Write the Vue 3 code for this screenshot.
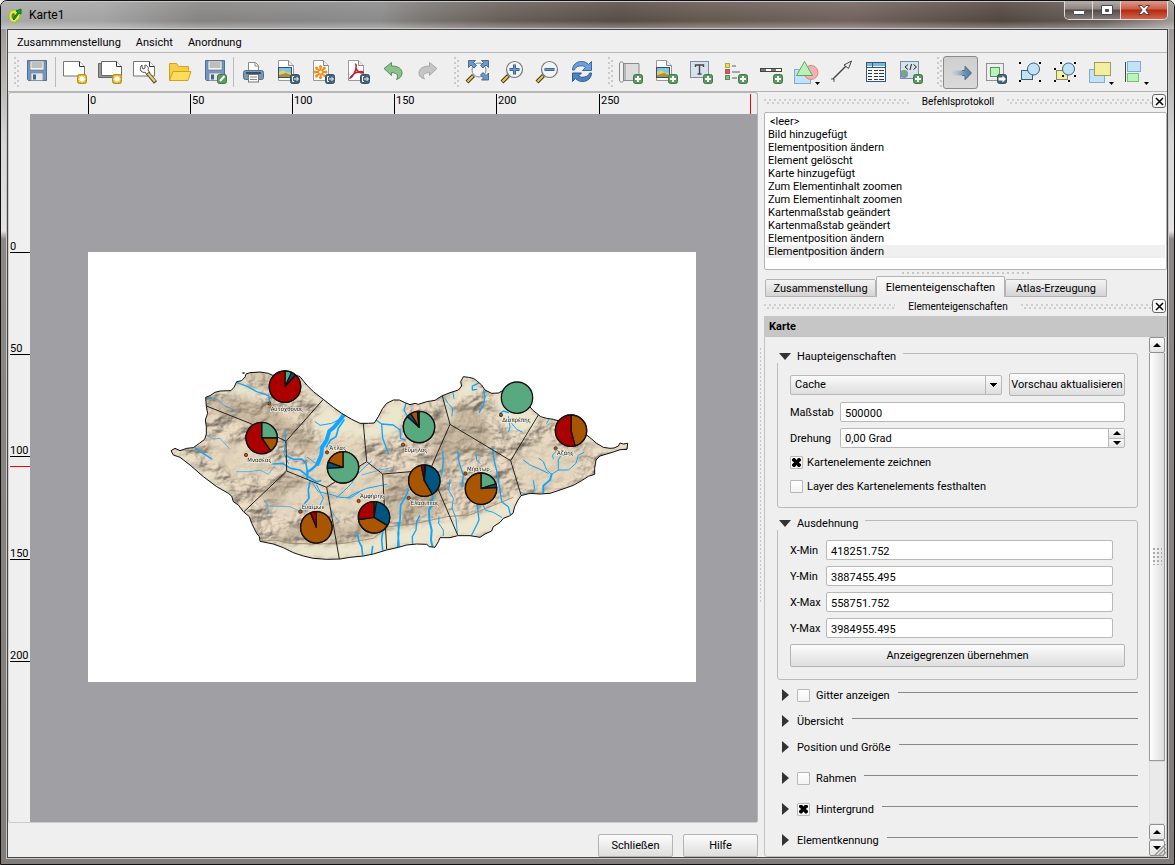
<script setup>
import { ref } from 'vue'

const badge = (fill, stroke) =>
  `<rect x="14.5" y="14.5" width="9" height="9" rx="2" fill="${fill}" stroke="${stroke}"/>`
const plus = badge('#5c9b62', '#3f7a45') + '<path d="M19 16v6M16 19h6" stroke="#fff" stroke-width="2"/>'
const star = badge('#d6b01c', '#b8940c') + '<path d="M19 15.5v7M15.5 19h7M16.5 16.5l5 5M21.5 16.5l-5 5" stroke="#fff" stroke-width="1.3"/>'
const exportBadge = badge('#45637c', '#33506a') + '<path d="M18 16.500h-1.500v5h1.500M18 19h4M20.500 17l2 2-2 2" stroke="#fff" fill="none"/>'
const sheet = '<path d="M2.500.500h10l5 5v15h-15z" fill="#fff" stroke="#999"/><path d="M12.500.500v5h5" fill="#eee" stroke="#888"/>'
const floppy = '<path d="M2.500.500h19v20h-18l-1-1z" fill="#7198c4" stroke="#4c6f9a"/><rect x="5" y="1" width="14" height="9" fill="#f4f4f4" stroke="#777" stroke-width=".7"/><path d="M6.500 3h11M6.500 5h11M6.500 7h11" stroke="#888"/><rect x="6" y="13" width="12" height="7.500" fill="#e8e8ea" stroke="#888" stroke-width=".7"/><rect x="8" y="14.500" width="3" height="5" fill="#3f6492"/>'
const handle = '<path d="M8.500 15.500L2 22" stroke="#333" stroke-width="4"/><path d="M8 16l-5.500 5.500" stroke="#f3c53c" stroke-width="2.200"/>'
const lens = handle + '<circle cx="14.500" cy="9.500" r="8" fill="#f1f4f8" stroke="#777" stroke-width="1.200"/>'
const picture = '<rect x="2.500" y="7.500" width="13" height="10" fill="#7cc3ef" stroke="#33506a"/><path d="M3 12l4-2 3 2 5 1v4h-12z" fill="#e5cd60"/><path d="M3 15l7-2 5 2v2h-12z" fill="#a69241"/>'
const drop = '<path d="M21 22h5l-2.500 3z" fill="#000"/>'
const dots = (l) => l.map(([x, y]) => `<rect x="${x}" y="${y}" width="2" height="2" fill="#000"/>`).join('')

const tools = [
  [
    { t: 'Speichern', i: floppy },
    { sep: true },
    { t: 'Neue Zusammenstellung', i: '<path d="M.500 1.500h16l5 5v9.500h-21z" fill="#fff" stroke="#777"/><path d="M16.500 1.500v5h5" fill="#fff" stroke="#333"/>' + star },
    { t: 'Duplizieren', i: '<path d="M.500 3.500h3v12h16v2h-19z" fill="#999" stroke="#666"/><path d="M3.500 1.500h15l5 5v9h-20z" fill="#fff" stroke="#666"/><path d="M18.500 1.500v5h5" fill="#fff" stroke="#333"/>' + star },
    { t: 'Verwaltung', i: '<path d="M.500 1.500h16l5 5v9.500h-21z" fill="#fff" stroke="#777"/><path d="M16.500 1.500v5h5" fill="#fff" stroke="#333"/><path d="M9 5c-2 1-2 4-1 6 1 1 3 2 4 1l2 3 3-2-2-3c1-2 0-4-3-5v3l-2 1-1-2z" fill="#fff" stroke="#555"/><path d="M14.500 13l8 9.500" stroke="#4c4633" stroke-width="4"/><path d="M15 13.500l7 8" stroke="#eccd72" stroke-width="2.200"/>' },
    { t: 'Vorlage laden', i: '<path d="M1.500 20.500v-17h7l2 3h10v4" fill="#f7cf46" stroke="#d2a21f"/><path d="M1.500 20.500l3.500-9h18l-3 9z" fill="#fddb5b" stroke="#d2a21f"/>' },
    { t: 'Als Vorlage speichern', i: floppy + badge('#5c9b62', '#3f7a45') + '<path d="M17 21l4.500-5" stroke="#fff" stroke-width="2"/>' },
    { sep: true },
    { t: 'Drucken', i: '<path d="M7.500 11v-8.500h7l3 3v5.500" fill="#fff" stroke="#888"/><path d="M14 3v3h3" fill="none" stroke="#888"/><rect x="2.500" y="10.500" width="20" height="9" rx="2" fill="#7898b4" stroke="#4f6d88"/><path d="M5 13h15" stroke="#35506a" stroke-width="2"/><rect x="7.500" y="14.500" width="10" height="7.500" fill="#fff" stroke="#777"/><path d="M9 17h7M9 19.500h7" stroke="#888"/>' },
    { t: 'Als Bild exportieren', i: sheet + picture + exportBadge },
    { t: 'Als SVG exportieren', i: sheet + '<g stroke="#ef8e1c" stroke-width="2"><path d="M9.500 6v12M3.500 12h12M5 7.500l9 9M14 7.500l-9 9"/></g><g fill="#ef8e1c"><circle cx="9.500" cy="6.500" r="1.500"/><circle cx="9.500" cy="17.500" r="1.500"/><circle cx="4" cy="12" r="1.500"/><circle cx="15" cy="12" r="1.500"/><circle cx="5.500" cy="8" r="1.500"/><circle cx="13.500" cy="8" r="1.500"/><circle cx="5.500" cy="16" r="1.500"/></g><circle cx="9.500" cy="12" r="1.500" fill="#fff"/>' + exportBadge },
    { t: 'Als PDF exportieren', i: sheet + '<path d="M9 4c2 0 1 3 1 4 1 3 4 5 7 5 1-1-1-2-4-1-4 0-8 4-9 6 2 0 6-7 6-10" fill="none" stroke="#c6212e" stroke-width="1.500"/>' + exportBadge },
    { t: 'Zurück', i: '<path d="M3 8.500l7.500-6v3.500c7 0 10.500 3 10.500 7 0 3-2 5.500-5.500 6.500 2-3.500 1.500-6.500-5-7v3z" fill="#8cc08e" stroke="#539157"/>' },
    { t: 'Wiederholen', i: '<path d="M21 8.500l-7.500-6v3.500c-7 0-10.500 3-10.500 7 0 3 2 5 5.500 6-2-3.500-1.500-6 5-6.500v3z" fill="#c4c4c4" stroke="#a9a9a9"/>' }
  ],
  [
    { t: 'Volle Ausdehnung', i: handle + '<circle cx="14" cy="10" r="7" fill="#f4f4f4" stroke="#888"/><g fill="#6d97c9" stroke="#31557f" stroke-width=".8"><path d="M3.500.500h7l-2 2 3 3-2.500 2.500-3-3-2.500 2.500z"/><path d="M23.500.500h-7l2 2-3 3 2.500 2.500 3-3 2.500 2.500z"/><path d="M23.500 20h-7l2-2-3-3 2.500-2.500 3 3 2.500-2.500z"/></g>' },
    { t: 'Hineinzoomen', i: lens + '<path d="M14.500 4.500v10M9.500 9.500h10" stroke="#31557f" stroke-width="3"/><path d="M14.500 5v9M10 9.500h9" stroke="#6d97c9" stroke-width="1.500"/>' },
    { t: 'Herauszoomen', i: lens + '<path d="M9.500 9.500h10" stroke="#31557f" stroke-width="3"/><path d="M10 9.500h9" stroke="#6d97c9" stroke-width="1.500"/>' },
    { t: 'Aktualisieren', i: '<path d="M2.500 10c0-5 4-8.500 9-8.500 3 0 5 1 7 3l3-3v9h-9l3-3c-2-2-4-2-6-1.500-3 .500-4.500 2-5 4z" fill="#6ea0d8" stroke="#3769a5"/><path d="M21.500 13c0 5-4 8.500-9 8.500-3 0-5-1-7-3l-3 3v-8.500h9l-3 3c2 1.500 4 1.500 6 1 3-.500 4.500-2 5-4z" fill="#4e83c0" stroke="#2a5d9b"/>' }
  ],
  [
    { t: 'Karte hinzufügen', i: '<path d="M2.500 3.500h17.500v17h-17.500z" fill="#dcdcdc" stroke="#8b8b8b"/><path d="M.500 4c0-3 4-3 4 0v16c0 3-4 3-4 0z" fill="#f1f1f1" stroke="#888"/><path d="M6 4v16" stroke="#b8b8b8" stroke-width="2"/>' + plus },
    { t: 'Bild hinzufügen', i: sheet + picture + plus },
    { t: 'Beschriftung hinzufügen', i: '<rect x="1.500" y="1.500" width="18" height="16" fill="#d8e2ec" stroke="#7e8d9b"/><path d="M6.500 7v-2h8v2M10.500 5v8.500M8.500 14h4" fill="none" stroke="#444" stroke-width="1.400"/>' + plus },
    { t: 'Legende hinzufügen', i: '<rect x="1.500" y="3.500" width="4" height="4" fill="#f2e61c" stroke="#aaa15e"/><rect x="1.500" y="9.500" width="4" height="4" fill="#e0545a" stroke="#9e5a5d"/><rect x="1.500" y="15.500" width="4" height="4" fill="#80bf80" stroke="#5c8c5c"/><path d="M8 6h4M8 12h8M8 18h5" stroke="#a5a5a5" stroke-width="2"/>' + plus },
    { t: 'Maßstab hinzufügen', i: '<rect x="1.500" y="8.500" width="21" height="3" fill="#fff" stroke="#444"/><path d="M2 10h5M12 10h5" stroke="#777" stroke-width="2"/>' + plus },
    { t: 'Form hinzufügen', i: '<rect x=".500" y="9.500" width="16" height="14" fill="#c3e2f7" stroke="#7baecf"/><circle cx="17" cy="12.500" r="7" fill="#f5b1b1" stroke="#dc8585"/><path d="M10.500 1.500l8 14h-16z" fill="#b9f2b9" stroke="#62a266"/>' + drop },
    { t: 'Pfeil hinzufügen', i: '<path d="M4 19L18 5" stroke="#444" stroke-width="1.400"/><path d="M15 5l7.500-4-3 7.500z" fill="#eee" stroke="#444"/><path d="M2 19h3v3" stroke="#555" fill="none"/>' },
    { t: 'Tabelle hinzufügen', i: '<rect x="2.500" y="2.500" width="19" height="19" fill="#f4f8fb" stroke="#315a78"/><path d="M3 4.500h18" stroke="#7ab4db" stroke-width="3"/><path d="M3 7.500h18M8.500 3v4" stroke="#315a78"/><path d="M4 10.500h4M10 10.500h4M15 10.500h5M4 13.500h4M10 13.500h4M15 13.500h5M4 16.500h4M10 16.500h4M15 16.500h5M4 19.500h4M10 19.500h4M15 19.500h5" stroke="#333"/>' },
    { t: 'HTML hinzufügen', i: '<rect x="1.500" y="1.500" width="18" height="17" fill="#d8e2ec" stroke="#7e8d9b"/><path d="M9 4.500L6 7l3 2.500M14.500 4.500l3 2.500-3 2.500M12.500 4l-1.500 6" stroke="#222" fill="none"/><circle cx="5" cy="14" r="4" fill="#8f80d8"/><path d="M2 12l4-2 3 4-5 3z" fill="#68b568"/>' + plus }
  ],
  [
    { t: 'Elementinhalt verschieben', on: true, i: '<path d="M4 10.500h13v-5l7 7.500-7 7.500v-5h-13z" fill="url(#fade)"/><path d="M14 10.500h3v-4l6 6.500-6 6.500v-4h-3" stroke="#53758f"/>' },
    { t: 'Element bewegen', i: '<rect x="3.500" y="3.500" width="17" height="17" fill="#eee" stroke="#909090"/><rect x="7.500" y="7.500" width="9" height="9" fill="#baf3ba" stroke="#519b55"/>' + badge('#45637c', '#33506a') + '<path d="M15.500 17.500h4v-2l3.500 3.500-3.500 3.500v-2h-4z" fill="#fff"/>' },
    { t: 'Gruppieren', i: '<rect x="3.500" y="10.500" width="11" height="9" fill="#c3e2f7" stroke="#3b6078"/><circle cx="15.500" cy="9" r="6" fill="#c3e2f7" stroke="#3b6078"/>' + dots([[1, 2], [21, 2], [1, 20], [21, 20]]) },
    { t: 'Gruppierung aufheben', i: '<rect x="3.500" y="10.500" width="11" height="9" fill="#f4eea0" stroke="#8b8758"/><circle cx="15.500" cy="9" r="6" fill="#c3e2f7" stroke="#3b6078"/>' + dots([[7, 2], [21, 2], [1, 8], [1, 20], [9, 15], [21, 15], [15, 20]]) },
    { t: 'Element heben', i: '<rect x="1.500" y="9.500" width="15" height="13" fill="#c3e2f7" stroke="#7baecf"/><rect x="6.500" y="2.500" width="16" height="13" fill="#f4eea0" stroke="#a39d5a"/>' + drop },
    { t: 'Elemente ausrichten', i: '<path d="M2.500 2v20" stroke="#444"/><rect x="4.500" y="1.500" width="13" height="10" fill="#c3e2f7" stroke="#7baecf"/><rect x="4.500" y="13.500" width="11" height="8" fill="#b9f7b9" stroke="#7cbc7c"/>' + drop }
  ]
]

const log = ['<leer>', 'Bild hinzugefügt', 'Elementposition ändern', 'Element gelöscht', 'Karte hinzugefügt', 'Zum Elementinhalt zoomen', 'Zum Elementinhalt zoomen', 'Kartenmaßstab geändert', 'Kartenmaßstab geändert', 'Elementposition ändern', 'Elementposition ändern']

const extent = ref([
  { id: 'xmin', label: 'X-Min', value: '418251.752' },
  { id: 'ymin', label: 'Y-Min', value: '3887455.495' },
  { id: 'xmax', label: 'X-Max', value: '558751.752' },
  { id: 'ymax', label: 'Y-Max', value: '3984955.495' }
])

const sections = [
  { name: 'Gitter anzeigen', check: true },
  { name: 'Übersicht' },
  { name: 'Position und Größe' },
  { name: 'Rahmen', check: true, gap: true },
  { name: 'Hintergrund', check: true, on: true, gap: true },
  { name: 'Elementkennung', gap: true }
]

const hTicks = [0, 50, 100, 150, 200, 250].map((v, i) => ({ v, p: Math.round(79.5 + i * 102.2) }))
const vTicks = [0, 50, 100, 150, 200].map((v, i) => ({ v, p: Math.round(138 + i * 102.2) }))

const G = '#58a980', B = '#005580', O = '#aa5500', R = '#aa0000'
const pies = [
  { x: 375, y: 80, s: [[G, 25], [B, 42], [R, 360]] },
  { x: 305, y: 234, s: [[G, 90], [O, 145], [R, 360]] },
  { x: 549, y: 322, s: [[G, 267], [B, 290], [O, 360]] },
  { x: 469, y: 502, s: [[O, 338], [R, 360]] },
  { x: 642, y: 472, s: [[G, 9], [B, 122], [O, 262], [R, 360]] },
  { x: 777, y: 201, s: [[G, 312], [B, 328], [O, 354], [R, 360]] },
  { x: 793, y: 362, s: [[G, 5], [B, 150], [O, 349], [R, 360]] },
  { x: 963, y: 386, s: [[G, 72], [B, 86], [O, 360]] },
  { x: 1071, y: 113, s: [[G, 360]] },
  { x: 1233, y: 212, s: [[O, 165], [R, 360]] }
].map((p) => {
  let from = 0
  const at = (a) => {
    const r = (a * Math.PI) / 180
    return `${(p.x + 47 * Math.sin(r)).toFixed(1)} ${(p.y - 47 * Math.cos(r)).toFixed(1)}`
  }
  const slices = p.s.map(([fill, to]) => {
    const d = `M${p.x} ${p.y}L${at(from)}A47 47 0 ${to - from > 180 ? 1 : 0} 1 ${at(to)}Z`
    from = to
    return { fill, d }
  })
  return { ...p, slices }
})

const towns = [
  { n: 'Αὐτόχθονος', x: 332, y: 152, cx: 328, cy: 131 },
  { n: 'Μνασέας', x: 262, y: 306, cx: 258, cy: 285 },
  { n: 'Ἄτλας', x: 507, y: 269, cx: 501, cy: 277 },
  { n: 'Εὐαίμων', x: 425, y: 446, cx: 421, cy: 455 },
  { n: 'Ἀμφήρης', x: 600, y: 415, cx: 596, cy: 423 },
  { n: 'Εὔμηλος', x: 733, y: 275, cx: 729, cy: 254 },
  { n: 'Ἐλάσιππος', x: 751, y: 435, cx: 746, cy: 414 },
  { n: 'Μήστωρ', x: 921, y: 332, cx: 916, cy: 341 },
  { n: 'Διαπρέπης', x: 1027, y: 186, cx: 1023, cy: 165 },
  { n: 'Ἀζάης', x: 1191, y: 286, cx: 1187, cy: 265 }
]

const island = 'M33 272L45 265L60 272L80 265L100 263L118 250L134 238L139 222L139 200L136 180L143 160L139 140L137 112L150 107L165 97L180 93L213 92L222 82L230 65L245 62L256 50L258 42L270 38L300 36L325 40L338 46L352 42L375 34L420 50L440 75L460 95L490 118L520 142L545 160L575 178L600 190L625 190L643 189L655 170L668 145L680 130L700 120L718 120L735 128L750 134L765 130L775 133L800 125L825 121L845 108L870 98L895 90L905 78L902 65L910 50L925 52L940 55L950 62L965 75L975 90L995 100L1015 99L1028 92L1050 100L1100 130L1120 152L1130 160L1142 170L1160 175L1180 178L1205 185L1270 217L1295 237L1310 250L1330 262L1350 265L1362 264L1375 258L1380 249L1390 252L1403 250L1401 268L1380 269L1360 276L1340 282L1320 288L1308 300L1304 325L1304 343L1285 349L1265 362L1240 376L1200 390L1170 400L1140 402L1110 400L1083 407L1074 420L1064 440L1059 460L1048 468L1030 475L1020 487L1000 500L995 513L975 522L960 532L930 527L893 527L870 533L840 533L835 545L825 562L808 560L800 553L770 552L740 555L715 562L680 570L640 582L610 588L570 592L540 597L500 598L460 595L430 588L400 578L370 563L340 552L300 544L298 530L290 520L275 490L268 470L250 455L235 435L220 425L215 408L205 400L170 380L130 350L90 315L60 292L40 285Z'

const lowland = [
  'M300 545L380 552L470 555L560 551L640 538L700 504L780 493L860 474L920 472L980 447L1050 417L1085 405L1060 465L960 535L890 530L835 535L825 565L740 555L640 584L520 600L420 590Z',
  'M390 40L545 160L610 192L643 189L700 120L735 130L735 175L700 235L620 238L560 225L490 230L450 190L490 150L430 90Z',
  'M33 272L60 272L110 315L210 400L222 430L160 380L60 295Z',
  'M850 110L905 85L902 60L925 52L965 75L940 100L870 130L880 180L860 180Z',
  'M220 82L240 60L290 90L325 105L270 110L180 100Z',
  'M1000 100L1060 110L1140 170L1110 215L1040 210L1010 150Z',
  'M1230 225L1270 217L1330 262L1403 250L1401 268L1330 285L1320 270Z'
]
const basins = [
  'M340 300L440 320L500 230L600 240L620 300L560 380L450 360L370 330Z',
  'M620 310L670 345L675 440L520 480L510 400Z',
  'M1060 300L1160 240L1260 290L1240 360L1090 395Z',
  'M440 360L500 385L515 470L475 455L440 420L390 470L310 450L380 400Z',
  'M140 230L250 250L340 300L330 345L240 350L150 300Z'
]
const ridges = [
  'M150 120L250 110L340 150L440 215L490 290L440 280L340 230L230 180L150 150Z',
  'M820 180L900 130L960 150L1000 240L960 290L900 260L860 330L820 320Z',
  'M280 400L390 340L430 370L330 430Z',
  'M690 350L800 330L860 380L850 460L690 480Z',
  'M260 40L330 42L330 90Z',
  'M560 500L620 470L690 500L640 530L340 535L420 490Z'
]

const borders = 'M139 138L270 190L378 244L490 118M378 244L380 333L252 455M380 333L500 382L538 597M500 382L620 305L610 190M620 305L668 342L800 331M668 342L680 568M847 108L870 193L810 330L893 525M870 193L1052 302L1135 165M1052 302L1083 405'

const rivers = [
  { w: 4, d: 'M231 68L262 79L290 95L326 107L330 128' },
  { w: 12, d: 'M553 163L540 180L522 202L508 213L500 240L486 262L484 285L472 312' },
  { w: 7, d: 'M472 312L455 328L442 336L442 355' },
  { w: 5, d: 'M552 180L535 205L528 230L512 240L500 260M380 288L400 298L425 297L438 310L442 335M340 312L368 310L392 325L420 330L445 350L470 366L482 362M450 365L445 390L447 415L435 430L437 452' },
  { w: 3, d: 'M375 212L377 245L372 280L385 310M465 185L480 196L515 190L540 177M442 292L460 305L475 315M458 370L475 395L510 403L540 412L570 414L600 395M530 412L550 395L575 370L590 345L610 325L635 303M560 414L585 400L620 385L680 373M470 375L490 415L480 435' },
  { w: 2, d: 'M139 115L155 118L170 115L190 135L215 147L230 160M139 225L160 237L180 235L208 265M230 335L270 335L300 330L325 343L345 317M312 420L325 438L390 440L422 455M323 440L325 460M605 345L660 330L695 323M510 445L525 470L535 482' },
  { w: 4, d: 'M105 263L120 275L140 287L155 297M648 180L665 192L700 195L720 210L722 235L735 240M665 195L668 235L685 280M738 130L732 150L740 165' },
  { w: 5, d: 'M592 520L597 545L605 560L608 585M668 515L665 540L668 570M638 560L635 580M715 488L716 520L713 560M745 390L737 410L722 435L720 480L714 520L717 560' },
  { w: 6, d: 'M818 405L817 430L807 450L808 480L815 510L813 540L818 563' },
  { w: 4, d: 'M758 557L757 530L768 510L770 485L779 467M848 275L850 305L845 345M893 275L898 310L910 345L906 380M998 265L1002 300L1012 340L1018 380L1025 425L1045 440L1052 467M935 525L950 495L957 480L952 435L957 410' },
  { w: 3, d: 'M837 470L836 490L850 510L850 527M870 360L866 390L880 415L876 445L888 475L892 520M970 435L975 450L1000 457L1025 472M948 282L950 300L960 310M855 115L864 130L878 145L876 168M878 93L882 115' },
  { w: 4, d: 'M955 70L937 78L937 90L950 88M971 90L975 110L970 135L958 157M1020 160L1030 153L1045 158' },
  { w: 6, d: 'M1150 397L1150 377L1170 360L1175 343' },
  { w: 3, d: 'M1175 343L1160 330L1150 305L1137 295M1090 300L1110 315L1140 328L1165 340M1175 343L1195 330L1225 330L1248 310L1255 285L1272 277M1195 330L1195 300L1205 282M1082 397L1108 405M1120 362L1124 385L1118 397M1045 170L1050 200L1046 215M1055 190L1070 208L1085 215M1160 190L1167 178M1192 270L1178 285L1180 297' }
]
</script>

<template>
  <div class="window">
    <header class="titlebar">
      <svg class="logo" width="14" height="16" viewBox="0 0 14 16">
        <path d="M6 2C2 2 1 6 1 8c0 4 2 6 4 6l3 1v-2c3-1 4-3 4-5 0-4-2-6-6-6z" fill="#dcea52" stroke="#a4b720" />
        <path d="M5 5c-2 1-2 5 0 6 3 0 3-6 0-6z" fill="#6f8716" />
        <path d="M5 11l5-7-2-1 5-2v5l-2-1-5 7z" fill="#17a32a" stroke="#08751a" />
      </svg>
      <h1>Karte1</h1>
      <div class="winbtns">
        <button aria-label="Minimieren"><svg width="12" height="10"><rect x=".5" y="5.500" width="11" height="4" rx="1" fill="#fff" stroke="#434a56" /></svg></button>
        <button aria-label="Maximieren"><svg width="12" height="10"><path d="M.5.500h11v9h-11zM4.500 4.500v2h3v-2z" fill="#fff" fill-rule="evenodd" stroke="#434a56" /></svg></button>
        <button class="close" aria-label="Fenster schließen"><svg width="12" height="10"><path d="M.5.500h3.500l2 2.300 2-2.300h3.500l-3.700 4.500 3.700 4.500h-3.500l-2-2.300-2 2.300h-3.500l3.700-4.500z" fill="#fff" stroke="#5b3b40" /></svg></button>
      </div>
    </header>

    <div class="client">
      <nav class="menubar">
        <a href="#">Zusammmenstellung</a><a href="#">Ansicht</a><a href="#">Anordnung</a>
      </nav>

      <div class="toolbars" role="toolbar">
        <svg width="0" height="0" class="defs"><linearGradient id="fade" x1="0" x2="1"><stop offset="0" stop-color="#9fb8ca" stop-opacity=".1" /><stop offset=".6" stop-color="#6f95b1" /><stop offset="1" stop-color="#557c99" /></linearGradient></svg>
        <div v-for="(bar, b) in tools" :key="b" class="bar" :class="{ lead: b === 0 }">
          <span class="vgrip"></span>
          <template v-for="(t, k) in bar" :key="k">
            <span v-if="t.sep" class="sep"></span>
            <button v-else :class="{ on: t.on }" :aria-label="t.t"><svg width="25" height="25" viewBox="0 0 25 25" fill="none" v-html="t.i" class="ico"></svg></button>
          </template>
        </div>
      </div>

      <main class="body">
        <section class="left">
          <div class="view">
            <svg class="hruler" height="21">
              <g v-for="t in hTicks" :key="t.v"><rect :x="t.p - 1" y="1" width="1" height="20" /><text :x="t.p + 1" y="11">{{ t.v }}</text></g>
              <rect x="741" y="1" width="1" height="20" fill="#f00" />
            </svg>
            <svg class="vruler" width="21">
              <g v-for="t in vTicks" :key="t.v"><rect x="1" :y="t.p" width="20" height="1" /><text x="1" :y="t.p - 2">{{ t.v }}</text></g>
              <rect x="1" y="352" width="20" height="1" fill="#f00" />
            </svg>
            <div class="canvas">
              <div class="page">
                <svg class="map" width="480" height="210" viewBox="0 0 1440 630">
                  <defs>
                    <clipPath id="isle"><path :d="island" /></clipPath>
                    <filter id="relief" x="0" y="0" width="100%" height="100%" color-interpolation-filters="sRGB">
                      <feTurbulence type="fractalNoise" baseFrequency=".016 .022" numOctaves="6" seed="8" result="n" />
                      <feDiffuseLighting in="n" surfaceScale="20" diffuseConstant="1.150" lighting-color="#dccdb6"><feDistantLight azimuth="225" elevation="58" /></feDiffuseLighting>
                    </filter>
                    <filter id="soft"><feGaussianBlur stdDeviation="9" /></filter>
                  </defs>
                  <g clip-path="url(#isle)">
                    <rect width="1440" height="630" filter="url(#relief)" />
                    <rect width="1440" height="630" fill="#d9cbb6" opacity=".4" />
                    <g filter="url(#soft)">
                      <path v-for="d in ridges" :key="d" :d="d" fill="#a8967c" opacity=".45" />
                      <path v-for="d in basins" :key="d" :d="d" fill="#e5d6bd" opacity=".8" />
                      <path v-for="d in lowland" :key="d" :d="d" fill="#ebe6cd" />
                    </g>
                    <path d="M300 544L345 540L390 550L470 552L550 550L640 535L685 500L760 492L860 470L930 465L990 440L1060 412" fill="none" stroke="#a7906f" stroke-width="3" />
                    <g fill="none" stroke="#12a5fb" stroke-linejoin="round" stroke-linecap="round">
                      <path v-for="r in rivers" :key="r.d" :d="r.d" :stroke-width="r.w" />
                    </g>
                  </g>
                  <path :d="borders" fill="none" stroke="#222" stroke-width="3" />
                  <path :d="island" fill="none" stroke="#111" stroke-width="3" />
                  <path d="M247 39h7" stroke="#111" stroke-width="4" />
                  <g v-for="t in towns" :key="t.n">
                    <circle :cx="t.cx" :cy="t.cy" r="5" fill="#a4561c" stroke="#301b08" stroke-width="2" />
                    <text :x="t.x" :y="t.y" class="town">{{ t.n }}</text>
                  </g>
                  <g v-for="p in pies" :key="p.x" stroke="#111" stroke-width="4" stroke-linejoin="round">
                    <circle :cx="p.x" :cy="p.y" r="47" :fill="p.slices[0].fill" />
                    <template v-if="p.slices.length > 1"><path v-for="s in p.slices" :key="s.d" :d="s.d" :fill="s.fill" /></template>
                  </g>
                </svg>
              </div>
            </div>
          </div>
          <footer><button class="btn">Schließen</button><button class="btn">Hilfe</button></footer>
        </section>

        <div class="splitter"><span></span></div>

        <aside class="right">
          <div class="docktitle"><span class="hgrip"></span><h2>Befehlsprotokoll</h2><span class="hgrip"></span><button class="x" aria-label="Befehlsprotokoll schließen"><svg width="9" height="9"><path d="M1 1l7 7M8 1L1 8" stroke="#000" stroke-width="1.500" /></svg></button></div>
          <ul class="log"><li v-for="(l, k) in log" :key="k" :class="{ cur: k === 10, first: k === 0 }">{{ l }}</li></ul>
          <div class="midgrip"></div>
          <div class="tabs" role="tablist">
            <button role="tab">Zusammenstellung</button><button role="tab" class="active" aria-selected="true">Elementeigenschaften</button><button role="tab">Atlas-Erzeugung</button>
          </div>
          <div class="docktitle second"><span class="hgrip"></span><h2>Elementeigenschaften</h2><span class="hgrip"></span><button class="x" aria-label="Elementeigenschaften schließen"><svg width="9" height="9"><path d="M1 1l7 7M8 1L1 8" stroke="#000" stroke-width="1.500" /></svg></button></div>
          <h3 class="item">Karte</h3>
          <div class="scroll">
            <div class="props">
              <fieldset class="main">
                <legend><i class="down"></i>Haupteigenschaften</legend>
                <div class="row top">
                  <select aria-label="Vorschau"><option>Cache</option></select>
                  <button class="btn">Vorschau aktualisieren</button>
                </div>
                <div class="row"><label for="scale">Maßstab</label><input id="scale" type="text" value="500000" /></div>
                <div class="row"><label for="rot">Drehung</label>
                  <div class="spin"><input id="rot" type="text" value="0,00 Grad" /><span><button aria-label="Mehr"><i class="up"></i></button><button aria-label="Weniger"><i class="dn"></i></button></span></div>
                </div>
                <label class="check"><input type="checkbox" checked />Kartenelemente zeichnen</label>
                <label class="check"><input type="checkbox" />Layer des Kartenelements festhalten</label>
              </fieldset>
              <fieldset class="ext">
                <legend><i class="down"></i>Ausdehnung</legend>
                <div v-for="e in extent" :key="e.id" class="row"><label :for="e.id">{{ e.label }}</label><input :id="e.id" v-model="e.value" type="text" /></div>
                <button class="btn">Anzeigegrenzen übernehmen</button>
              </fieldset>
              <div class="sections">
                <div v-for="s in sections" :key="s.name" class="section" :class="{ gap: s.gap }">
                  <i class="rt"></i>
                  <label v-if="s.check" class="check"><input type="checkbox" :checked="s.on" />{{ s.name }}</label>
                  <span v-else>{{ s.name }}</span>
                  <hr />
                </div>
              </div>
            </div>
            <div class="sbar">
              <button aria-label="Nach oben"><i class="up"></i></button>
              <div class="thumb"><span></span></div>
              <div class="track"></div>
              <button aria-label="Seite nach oben"><i class="up"></i></button>
              <button aria-label="Nach unten"><i class="dn"></i></button>
            </div>
            <svg class="size" width="12" height="12"><path d="M0 12L12 0M4 12l8-8M8 12l4-4" stroke="#999" stroke-width="1.500" /></svg>
          </div>
        </aside>
      </main>
    </div>
  </div>
</template>

<style>
body { background: #efefef; }
</style>

<style scoped>
* { box-sizing: border-box; }
.window, button, input, select { font-family: Roboto, "DejaVu Sans Condensed", sans-serif; font-size: 11px; line-height: 13px; color: #000; }
h1, h2, h3, ul { margin: 0; padding: 0; font-weight: normal; font-size: 11px; }
button { padding: 0; margin: 0; border: 0; background: none; }
i { display: block; flex: none; width: 0; height: 0; }
.window { display: flex; flex-direction: column; min-height: 100vh; padding: 0 6px 6px; border: 1px solid #111; border-radius: 7px 7px 0 0;
  background: linear-gradient(#8f8b8a 0, #d8d6d6 140px, #e4e2e2 230px, #8c8886 238px, #7f7c7a 100%); }
.titlebar { display: flex; align-items: center; height: 28px; margin: 0 -6px; padding: 0 0 0 7px; border-top: 1px solid #c9c9c9; border-radius: 6px 6px 0 0;
  background: linear-gradient(rgba(255,255,255,.12), rgba(255,255,255,0) 70%, rgba(255,255,255,.35)), linear-gradient(90deg, #a9a8a8 0, #a3a3a3 100px, #858382 200px, #8a8a8a 380px, #7a7672 420px, #675e59 500px, #574c46 620px, #63584f 700px, #71625e 850px, #51463f 1000px, #665c58 1100px, #9c9896 100%); }
.titlebar h1 { margin-left: 7px; font-size: 12px; line-height: 15px; }
.winbtns { display: flex; align-self: flex-start; margin: -1px 6px 0 auto; border: 1px solid #ddd; border-top: 0; border-radius: 0 0 5px 5px; overflow: hidden; }
.winbtns button { display: flex; align-items: center; justify-content: center; width: 28px; height: 18px; border-right: 1px solid #ddd; background: linear-gradient(#b5aeab, #8d8481 45%, #554b47 50%, #857c79); }
.winbtns .close { width: 46px; border: 0; background: linear-gradient(#dd9c8b, #cb5c45 45%, #b12a0f 50%, #d4654a); }
.client { flex: 1; display: flex; flex-direction: column; background: #efefef; border: 1px solid #444; box-shadow: 0 0 0 1px #c6c6c6; }
.menubar { display: flex; gap: 15px; height: 23px; padding: 6px 9px 0; border-bottom: 1px solid #bbb; }
.menubar a { color: #000; text-decoration: none; }
.toolbars { display: flex; height: 39px; border-bottom: 1px solid #b5b5b5; align-items: center; }
.defs { position: absolute; }
.bar { display: flex; align-items: center; }
.bar button { display: flex; align-items: center; justify-content: center; width: 35px; height: 33px; border: 1px solid transparent; border-radius: 3px; }
.bar button.on { border-color: #8a8a8a; background: linear-gradient(#cfcfcf, #dadada); }
.ico { flex: none; overflow: visible; }
.sep { width: 3px; height: 30px; border-left: 1px solid #bbb; }
.vgrip { width: 14px; height: 30px; background: linear-gradient(#c9c9c9 2px, transparent 2px) 8px 0/2px 5px repeat-y, linear-gradient(#c9c9c9 2px, transparent 2px) 11px 3px/2px 5px repeat-y; }
.lead .vgrip { width: 12px; background-position: 6px 0, 9px 3px; }
.body { flex: 1; display: flex; }
.left { flex: 1; min-width: 0; display: flex; flex-direction: column; }
.view { flex: 1; display: grid; grid-template: 21px 1fr / 21px 1fr; border: 1px solid #b5b5b5; border-bottom-color: #ccc; border-left-color: #ccc; border-radius: 3px; }
.hruler { grid-column: 1 / 3; width: 100%; }
.vruler { grid-row: 2; height: 100%; }
.canvas { position: relative; background: #a09fa4; }
.page { position: absolute; left: 58px; top: 138px; width: 608px; height: 430px; background: #fff; }
.map { position: absolute; left: 72px; top: 108px; }
.town { font-family: "DejaVu Sans Condensed", sans-serif; font-size: 18px; paint-order: stroke; stroke: #f4efe2; stroke-width: 4px; fill: #222; }
footer { display: flex; justify-content: flex-end; gap: 10px; padding: 11px 0 0; height: 34px; }
footer .btn { width: 75px; }
.btn { height: 23px; border: 1px solid #b4b4b4; border-radius: 2px; background: linear-gradient(#fcfcfc, #dedede); white-space: nowrap; }
.splitter { width: 6px; display: flex; align-items: center; }
.splitter span { width: 3px; height: 254px; background: linear-gradient(#c6c6c6 2px, transparent 2px) 2px 0/2px 4px repeat-y; }
.right { width: 403px; flex: none; display: flex; flex-direction: column; }
.docktitle { display: flex; align-items: center; height: 20px; padding: 0 1px 2px 0; }
.docktitle h2 { font-size: 10px; margin: 0 13px; }
.hgrip { flex: 1; height: 5px; background: linear-gradient(90deg, #cdcdcd 2px, transparent 2px) 0 0/5px 2px repeat-x, linear-gradient(90deg, #cdcdcd 2px, transparent 2px) 3px 3px/5px 2px repeat-x; }
.x { display: flex; align-items: center; justify-content: center; width: 14px; height: 14px; border: 1px solid #666; border-radius: 3px; background: #f8f8f8; }
.log { list-style: none; height: 158px; padding: 2px 1px; border: 1px solid #b3b3b3; border-radius: 2px; background: #fff; }
.log li { height: 13px; padding-left: 2px; }
.log .first { padding-left: 4px; }
.log .cur { background: #f0f0f0; }
.midgrip { width: 128px; height: 6px; margin: 0 auto; background: linear-gradient(90deg, #c6c6c6 2px, transparent 2px) 0 2px/5px 2px repeat-x; }
.tabs { display: flex; align-items: flex-end; height: 21px; padding-left: 1px; }
.tabs button { width: 111px; height: 18px; border: 1px solid #b3b3b3; border-radius: 2px 2px 0 0; background: linear-gradient(#f4f4f4, #d4d4d4); }
.tabs .active { width: 129px; height: 21px; border-bottom: 0; background: linear-gradient(#f8f8f8, #efefef); }
.tabs button:last-child { width: 102px; }
.docktitle.second { height: 18px; padding-bottom: 0; }
.item { height: 20px; margin-top: 1px; padding: 4px 5px 0; font-weight: bold; background: #c6c6c6; }
.scroll { position: relative; flex: 1; display: flex; border: 1px solid #c2c2c2; border-radius: 0 0 3px 3px; padding-right: 1px; }
.props { flex: 1; padding: 7px 11px 0 12px; }
fieldset { margin: 0; padding: 10px 12px 14px; border: 1px solid #bbb; border-radius: 3px; min-width: 0; }
legend { display: flex; align-items: center; gap: 6px; margin-left: -13px; padding: 6px 7px 0 2px; background: #efefef; }
.row { display: flex; align-items: center; margin-bottom: 6px; }
.row.top { gap: 7px; }
.row label { width: 50px; flex: none; }
.row input { flex: 1; min-width: 0; height: 20px; padding: 2px 4px 0; border: 1px solid #b8b8b8; border-radius: 2px; background: #fff; }
select { flex: 1; min-width: 0; height: 20px; padding: 0 4px; appearance: none; border: 1px solid #b8b8b8; border-radius: 2px; background: linear-gradient(#000, #000) right 4px top 7px/7px 1px no-repeat, linear-gradient(#000, #000) right 5px top 8px/5px 1px no-repeat, linear-gradient(#000, #000) right 6px top 9px/3px 1px no-repeat, linear-gradient(#000, #000) right 7px top 10px/1px 1px no-repeat, linear-gradient(#b8b8b8, #b8b8b8) right 15px top 0/1px 20px no-repeat, linear-gradient(#fafafa, #dedede); }
.main .btn { width: 116px; }
.spin { flex: 1; display: flex; height: 20px; border: 1px solid #b8b8b8; border-radius: 2px; background: #fff; }
.row .spin input { border: 0; height: 18px; padding-top: 0; }
.spin span { width: 16px; display: flex; flex-direction: column; border-left: 1px solid #b8b8b8; }
.spin button, .sbar button { display: flex; flex: 1; align-items: center; justify-content: center; background: linear-gradient(#fafafa, #e4e4e4); }
.spin button + button { border-top: 1px solid #b8b8b8; }
.up { border: 4px solid transparent; border-top: 0; border-bottom-color: #000; }
.dn { border: 4px solid transparent; border-bottom: 0; border-top-color: #000; }
.down { border: 6px solid transparent; border-bottom: 0; border-top: 7px solid #333; }
.rt { border: 6px solid transparent; border-right: 0; border-left: 7px solid #333; }
.check { display: flex; align-items: center; gap: 4px; height: 13px; white-space: nowrap; }
.main .check { margin-top: 8px; }
.main .check + .check { margin-top: 11px; }
.check input { appearance: none; flex: none; width: 13px; height: 13px; margin: 0; border: 1px solid #b8b8b8; border-radius: 1px; background: linear-gradient(#fff, #f3f3f3); }
.check input:checked::before { content: ""; display: block; width: 9px; height: 9px; margin: 1px; background: #000; clip-path: polygon(0 15%, 15% 0, 32% 0, 50% 22%, 68% 0, 85% 0, 100% 15%, 100% 30%, 76% 50%, 100% 70%, 100% 85%, 85% 100%, 68% 100%, 50% 78%, 32% 100%, 15% 100%, 0 85%, 0 70%, 24% 50%, 0 30%); }
.ext { margin-top: 3px; padding-bottom: 12px; }
.ext .row { margin-right: 12px; }
.ext .row label { width: 36px; }
.ext .btn { display: block; width: 100%; }
.sections { padding-top: 5px; }
.section { display: flex; align-items: center; height: 20px; margin-bottom: 6px; padding-left: 5px; gap: 8px; }
.section.gap { margin-top: 11px; margin-bottom: 11px; }
.section.gap + .gap { margin-top: 0; }
.section.gap:last-child { margin-bottom: 0; }
.section .check { gap: 6px; }
hr { flex: 1; height: 1px; margin: 0 0 5px; border: 0; background: #888; }
.sbar { width: 16px; display: flex; flex-direction: column; background: #eee; }
.sbar button { flex: none; height: 16px; border: 1px solid #8f8f8f; border-radius: 2px; }
.thumb { flex: 410; display: flex; align-items: center; justify-content: center; border: 1px solid #999; border-top: 0; background: linear-gradient(90deg, #fff, #dcdcdc); }
.thumb span { width: 10px; height: 18px; background: radial-gradient(#aaa 1px, transparent 1px) 0 0/4px 4px; }
.track { flex: 62; border: 1px solid #ddd; background: #eaeaea; }
.size { position: absolute; right: 0; bottom: 0; }
</style>
